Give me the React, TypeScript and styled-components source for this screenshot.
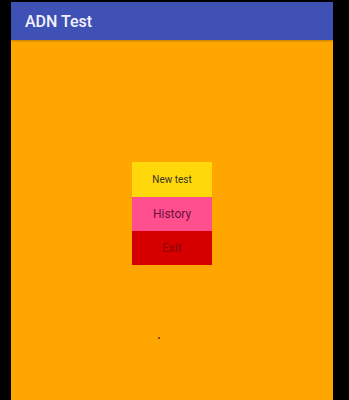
import React from "react";
import styled, { createGlobalStyle } from "styled-components";

const Global = createGlobalStyle`
  html, body { margin: 0; padding: 0; background: #000; }
  body { font-family: Roboto, "Noto Sans", "Liberation Sans", sans-serif; }
`;

const Frame = styled.div`
  width: 322px;
  height: 398px;
  margin: 2px 0 0 11px;
  display: flex;
  flex-direction: column;
  background: #ffa600;
  overflow: hidden;
`;

const Header = styled.header`
  height: 38px;
  flex: none;
  background: #3f51b5;
  display: flex;
  align-items: center;
  padding-left: 14px;
  color: #f2f2ff;
  font-size: 16px;
  font-weight: 500;
  box-shadow: 0 1px 2px rgba(0, 0, 0, 0.25);
`;

const Main = styled.main`
  flex: 1;
  display: flex;
  flex-direction: column;
  align-items: center;
  padding-top: 122px;
`;

const MenuButton = styled.div<{ $bg: string; $fg: string; $h: number; $size: number }>`
  width: 80px;
  height: ${(p) => p.$h}px;
  background: ${(p) => p.$bg};
  color: ${(p) => p.$fg};
  font-size: ${(p) => p.$size}px;
  display: flex;
  align-items: center;
  justify-content: center;
`;

const Dot = styled.div`
  width: 2px;
  height: 2px;
  margin-top: 72px;
  margin-right: 26px;
  background: #8a4a10;
`;

export default function App() {
  return (
    <>
      <Global />
      <Frame>
        <Header>ADN Test</Header>
        <Main>
          <MenuButton $bg="#ffd80a" $fg="#3a3320" $h={35} $size={10}>
            New test
          </MenuButton>
          <MenuButton $bg="#ff4f8d" $fg="#6b1040" $h={34} $size={12}>
            History
          </MenuButton>
          <MenuButton $bg="#d60000" $fg="#8c0000" $h={34} $size={12}>
            Exit
          </MenuButton>
          <Dot />
        </Main>
      </Frame>
    </>
  );
}
